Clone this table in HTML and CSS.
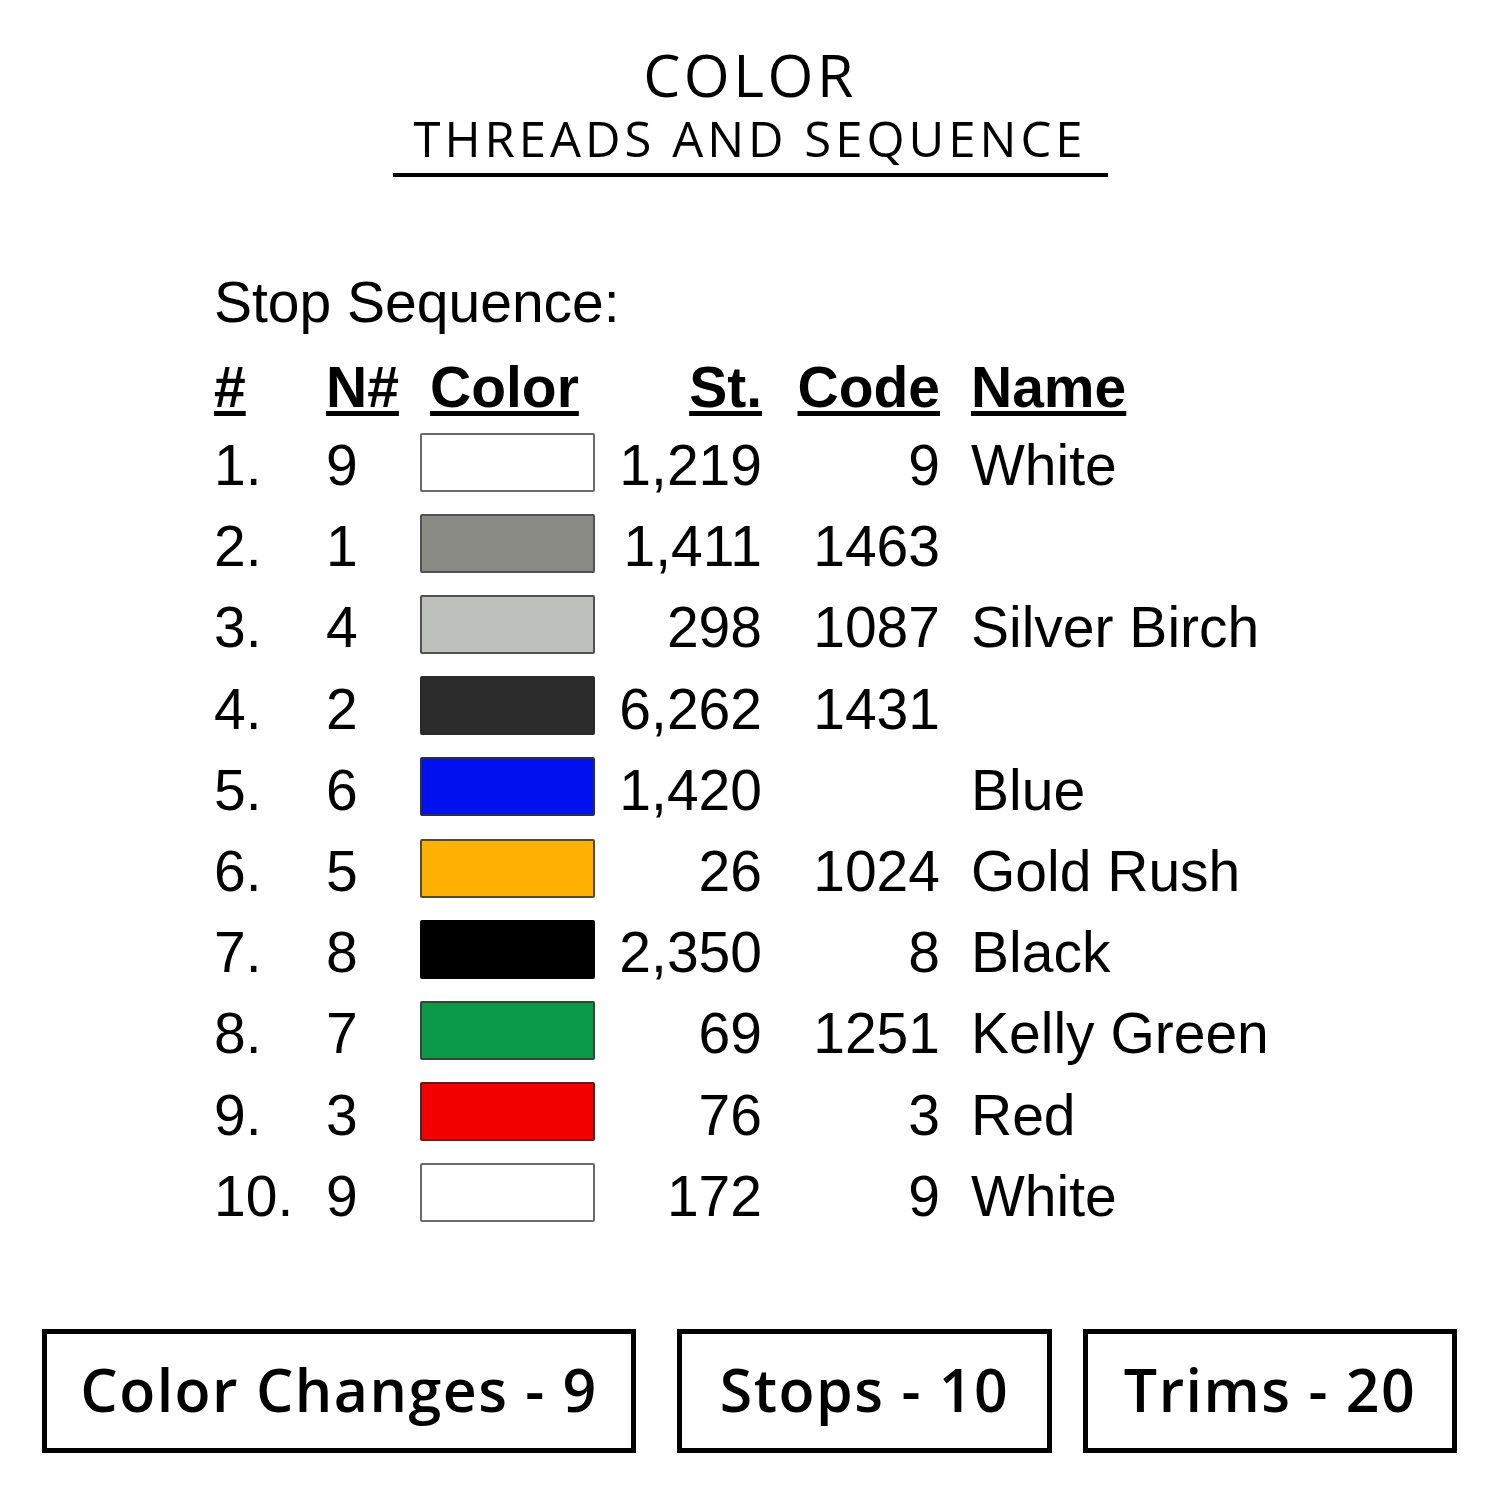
FILE: index.html
```html
<!DOCTYPE html>
<html lang="en">
<head>
<meta charset="utf-8">
<title>Color – Threads and Sequence</title>
<link rel="stylesheet" href="styles.css">
</head>
<body>
<div class="page">
  <header class="title-block">
    <div class="title">COLOR</div>
    <div class="subtitle">THREADS AND SEQUENCE</div>
    <div class="rule"></div>
  </header>

  <section class="sheet">
    <div class="sheet-title">Stop Sequence:</div>
    <div class="row head">
      <span class="c-num"><u>#</u></span>
      <span class="c-n"><u>N#</u></span>
      <span class="c-sw head-color"><u>Color</u></span>
      <span class="c-st"><u>St.</u></span>
      <span class="c-code"><u>Code</u></span>
      <span class="c-name"><u>Name</u></span>
    </div>
    <div class="row"><span class="c-num">1.</span><span class="c-n">9</span><span class="c-sw"><span class="swatch sw-white"></span></span><span class="c-st">1,219</span><span class="c-code">9</span><span class="c-name">White</span></div>
    <div class="row"><span class="c-num">2.</span><span class="c-n">1</span><span class="c-sw"><span class="swatch sw-gray"></span></span><span class="c-st">1,411</span><span class="c-code">1463</span><span class="c-name"></span></div>
    <div class="row"><span class="c-num">3.</span><span class="c-n">4</span><span class="c-sw"><span class="swatch sw-silver"></span></span><span class="c-st">298</span><span class="c-code">1087</span><span class="c-name">Silver Birch</span></div>
    <div class="row"><span class="c-num">4.</span><span class="c-n">2</span><span class="c-sw"><span class="swatch sw-charcoal"></span></span><span class="c-st">6,262</span><span class="c-code">1431</span><span class="c-name"></span></div>
    <div class="row"><span class="c-num">5.</span><span class="c-n">6</span><span class="c-sw"><span class="swatch sw-blue"></span></span><span class="c-st">1,420</span><span class="c-code"></span><span class="c-name">Blue</span></div>
    <div class="row"><span class="c-num">6.</span><span class="c-n">5</span><span class="c-sw"><span class="swatch sw-gold"></span></span><span class="c-st">26</span><span class="c-code">1024</span><span class="c-name">Gold Rush</span></div>
    <div class="row"><span class="c-num">7.</span><span class="c-n">8</span><span class="c-sw"><span class="swatch sw-black"></span></span><span class="c-st">2,350</span><span class="c-code">8</span><span class="c-name">Black</span></div>
    <div class="row"><span class="c-num">8.</span><span class="c-n">7</span><span class="c-sw"><span class="swatch sw-green"></span></span><span class="c-st">69</span><span class="c-code">1251</span><span class="c-name">Kelly Green</span></div>
    <div class="row"><span class="c-num">9.</span><span class="c-n">3</span><span class="c-sw"><span class="swatch sw-red"></span></span><span class="c-st">76</span><span class="c-code">3</span><span class="c-name">Red</span></div>
    <div class="row"><span class="c-num">10.</span><span class="c-n">9</span><span class="c-sw"><span class="swatch sw-white"></span></span><span class="c-st">172</span><span class="c-code">9</span><span class="c-name">White</span></div>
  </section>

  <footer class="totals">
    <div class="total total-wide">Color Changes - 9</div>
    <div class="total total-mid">Stops - 10</div>
    <div class="total total-end">Trims - 20</div>
  </footer>
</div>
</body>
</html>
```

FILE: styles.css
```css
html, body {
  margin: 0;
  padding: 0;
  background: #ffffff;
  color: #000000;
}

.page {
  width: 1500px;
  display: flex;
  flex-direction: column;
}

/* ---------- title ---------- */
.title-block {
  display: flex;
  flex-direction: column;
  align-items: center;
  padding-top: 45px;
  font-family: "Open Sans", "Noto Sans", sans-serif;
}

.title {
  font-size: 59px;
  line-height: 59px;
  font-weight: 500;
  letter-spacing: 3.5px;
}

.subtitle {
  margin-top: 10px;
  font-size: 49px;
  line-height: 49px;
  font-weight: 400;
  letter-spacing: 4px;
}

.rule {
  margin-top: 10px;
  width: 715px;
  height: 4px;
  background: #000;
}

/* ---------- stop sequence table ---------- */
.sheet {
  margin-top: 97px;
  padding-left: 214px;
  font-family: "Liberation Sans", Arial, sans-serif;
  font-size: 57px;
}

.sheet-title {
  line-height: 57px;
  height: 57px;
}

.row {
  display: flex;
  align-items: center;
  height: 81.2px;
  line-height: 81.2px;
  white-space: nowrap;
}

.row.head {
  margin-top: 28px;
  margin-bottom: 9px;
  height: 57px;
  line-height: 57px;
  font-weight: 700;
}

.row.head u {
  text-decoration: underline;
  text-decoration-thickness: 5px;
  text-underline-offset: 4px;
}

.c-num { width: 112px; }
.c-n { width: 94px; }
.c-sw {
  width: 175px;
  display: flex;
  align-items: center;
}
.head-color { padding-left: 10px; box-sizing: border-box; }
.c-st { width: 167px; text-align: right; }
.c-code { width: 178px; text-align: right; }
.c-name { margin-left: 31px; }

.swatch {
  display: block;
  width: 175px;
  height: 59px;
  box-sizing: border-box;
  border: 2px solid #505050;
  border-radius: 2px;
  margin-bottom: 7px;
}

.sw-white { background: #ffffff; border-color: #6a6a6a; }
.sw-gray { background: #898b84; }
.sw-silver { background: #bec0bb; }
.sw-charcoal { background: #2c2c2c; border-color: #2a2a2a; }
.sw-blue { background: #0010ef; border-color: #2a2a60; }
.sw-gold { background: #ffb000; border-color: #5a4a20; }
.sw-black { background: #000000; border-color: #000; }
.sw-green { background: #0b9a48; border-color: #2a4a38; }
.sw-red { background: #f20000; border-color: #5a2020; }

/* ---------- totals ---------- */
.totals {
  display: flex;
  margin-top: 92px;
  padding-left: 42px;
  font-family: "Open Sans", "Noto Sans", sans-serif;
}

.total {
  height: 124px;
  box-sizing: border-box;
  border: 5px solid #000;
  display: flex;
  align-items: center;
  justify-content: center;
  padding-bottom: 4px;
  font-size: 59px;
  font-weight: 600;
  letter-spacing: 1.5px;
  white-space: nowrap;
}

.total-wide { width: 594px; margin-right: 41px; }
.total-mid { width: 375px; margin-right: 31px; }
.total-end { width: 374px; }
```
